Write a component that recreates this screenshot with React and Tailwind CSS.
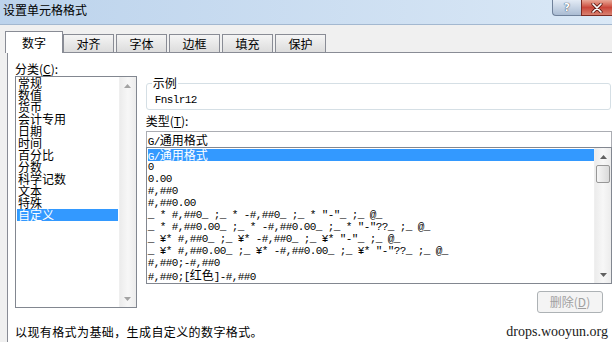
import React from "react";

const CJK = /([\u3000-\u9fff\uff00-\uffef]+)/;

function Mixed({ text }) {
  return text.split(CJK).map((part, i) =>
    CJK.test(part) ? (
      <span key={i} className="font-['Noto_Sans_CJK_SC',sans-serif] text-[12px] tracking-normal">
        {part}
      </span>
    ) : (
      <span key={i}>{part}</span>
    )
  );
}

function Arrow({ up, color }) {
  return (
    <svg width="7" height="4" viewBox="0 0 7 4">
      <path d={up ? "M0 4 L3.5 0 L7 4Z" : "M0 0 L3.5 4 L7 0Z"} fill={color} />
    </svg>
  );
}

function ScrollBar({ thumb, color }) {
  return (
    <div className="w-[17px] h-full flex flex-col bg-gradient-to-r from-[#ececec] via-[#f7f7f7] to-[#ececec] border-l border-[#efefef]">
      <div className="h-[17px] flex items-center justify-center">
        <Arrow up color={color} />
      </div>
      {thumb ? (
        <div className="h-[18px] mx-[1px] rounded-[2px] border border-[#979797] bg-gradient-to-r from-[#f6f6f6] to-[#dadada]" />
      ) : null}
      <div className="flex-1" />
      <div className="h-[17px] flex items-center justify-center">
        <Arrow color={color} />
      </div>
    </div>
  );
}

const categories = ["常规", "数值", "货币", "会计专用", "日期", "时间", "百分比", "分数", "科学记数", "文本", "特殊", "自定义"];

const formats = [
  "G/通用格式",
  "0",
  "0.00",
  "#,##0",
  "#,##0.00",
  '_ * #,##0_ ;_ * -#,##0_ ;_ * "-"_ ;_ @_ ',
  '_ * #,##0.00_ ;_ * -#,##0.00_ ;_ * "-"??_ ;_ @_ ',
  '_ ¥* #,##0_ ;_ ¥* -#,##0_ ;_ ¥* "-"_ ;_ @_ ',
  '_ ¥* #,##0.00_ ;_ ¥* -#,##0.00_ ;_ ¥* "-"??_ ;_ @_ ',
  "#,##0;-#,##0",
  "#,##0;[红色]-#,##0",
];

const tabs = ["对齐", "字体", "边框", "填充", "保护"];

export default function App() {
  return (
    <div className="w-[612px] h-[342px] overflow-hidden bg-[#f0f0f0] flex flex-col font-['Noto_Sans_CJK_SC',sans-serif] text-[12px] text-black">
      {/* Title bar */}
      <div className="h-[25px] shrink-0 flex items-start justify-between bg-gradient-to-r from-[#bcd3ec] to-[#dae8f6] border-b border-[#a3b8d0]">
        <div className="pl-[3px] pt-[3px] leading-[14px] text-[12px]">设置单元格格式</div>
        <div className="flex">
          <div className="w-[29px] h-[16px] rounded-bl-[4px] border border-t-0 border-r-0 border-[#6f819a] bg-gradient-to-b from-[#e3ebf5] to-[#aabcd3] flex items-center justify-center">
            <span className="font-['DejaVu_Sans',sans-serif] font-bold text-[11px] leading-[12px] text-white [text-shadow:0_0_1px_#35465e,0_0_1px_#35465e]">?</span>
          </div>
          <div className="w-[31px] h-[16px] border-b border-l border-[#7a2a22] bg-gradient-to-b from-[#e8a898] via-[#c9463a] to-[#d88070] flex items-center justify-center">
            <svg width="12" height="10" viewBox="0 0 12 10">
              <path d="M2 1 L10 9 M10 1 L2 9" stroke="#5c1b14" strokeWidth="3.2" strokeLinecap="round" />
              <path d="M2 1 L10 9 M10 1 L2 9" stroke="#ffffff" strokeWidth="1.7" strokeLinecap="round" />
            </svg>
          </div>
        </div>
      </div>

      {/* Tabs */}
      <div className="h-[27px] shrink-0 flex items-end pl-[5px] relative z-10">
        <div className="w-[58px] h-[22px] -mb-[1px] border border-b-0 border-[#898c95] bg-white flex items-center justify-center leading-[14px] pt-[1px]">
          数字
        </div>
        {tabs.map((t, i) => (
          <div
            key={t}
            className="w-[51px] h-[18px] mr-[2px] border border-b-0 border-[#898c95] bg-gradient-to-b from-[#f5f5f5] to-[#dcdcdc] flex items-center justify-center leading-[14px] first:ml-0"
          >
            {t}
          </div>
        ))}
      </div>

      {/* Panel */}
      <div className="flex-1 ml-[7px] border-l border-t border-[#898c95] bg-white flex flex-col">
        <div className="flex pl-[7px]">
          {/* Left column */}
          <div className="w-[122px] pt-[8px] flex flex-col">
            <div className="h-[15px] leading-[15px]">
              分类(<span className="underline">C</span>):
            </div>
            <div className="h-[232px] border border-[#828790] flex">
              <div className="flex-1 flex flex-col px-[1px]">
                {categories.map((c, i) => (
                  <div
                    key={c}
                    className={
                      "h-[12px] leading-[12px] pl-[1px] whitespace-nowrap " +
                      (i === categories.length - 1 ? "bg-[#3399ff] text-white" : "")
                    }
                  >
                    {c}
                  </div>
                ))}
              </div>
              <ScrollBar color="#a3a3a3" />
            </div>
          </div>

          {/* Right column */}
          <div className="w-[467px] ml-[9px] pt-[23px] flex flex-col">
            <fieldset className="w-[465px] border border-[#d5dfe5] rounded-[3px] pb-[3px]">
              <legend className="ml-[5px] px-[1px] leading-[14px]">示例</legend>
              <div className="pt-[4px] pl-[8px] h-[16px] leading-[12px] font-['Liberation_Mono',monospace] text-[11px] tracking-[-0.6px]">
                Fnslr12
              </div>
            </fieldset>
            <div className="mt-[4px] h-[14px] leading-[14px]">
              类型(<span className="underline">T</span>):
            </div>
            <div className="mt-[3px] h-[16px] border border-b-0 border-[#abadb3] pl-[1px] leading-[15px] font-['Liberation_Mono',monospace] text-[11px] tracking-[-0.6px]">
              <Mixed text="G/通用格式" />
            </div>
            <div className="h-[137px] border border-[#828790] flex">
              <div className="flex-1 pt-[1px] pl-[1px] flex flex-col">
                {formats.map((f, i) => (
                  <div
                    key={i}
                    className={
                      "h-[12px] leading-[12px] whitespace-pre overflow-visible font-['Liberation_Mono',monospace] text-[11px] tracking-[-0.6px] " +
                      (i === 0 ? "bg-[#3399ff] text-white" : "")
                    }
                  >
                    <Mixed text={f} />
                  </div>
                ))}
              </div>
              <ScrollBar thumb color="#606060" />
            </div>
            <div className="mt-[7px] self-end mr-[9px] w-[66px] h-[22px] rounded-[3px] border border-[#adb2b5] bg-[#f4f4f4] flex items-center justify-center text-[#a0a0a0] leading-[14px]">
              删除(<span className="underline">D</span>)
            </div>
          </div>
        </div>

        <div className="mt-auto mb-[2px] h-[16px] flex items-center justify-between pl-[7px] pr-[4px]">
          <span className="leading-[16px] tracking-[0.4px]">以现有格式为基础，生成自定义的数字格式。</span>
          <span className="font-['Liberation_Serif',serif] text-[14px] leading-[16px] text-[#1a1a1a]">drops.wooyun.org</span>
        </div>
      </div>
    </div>
  );
}
